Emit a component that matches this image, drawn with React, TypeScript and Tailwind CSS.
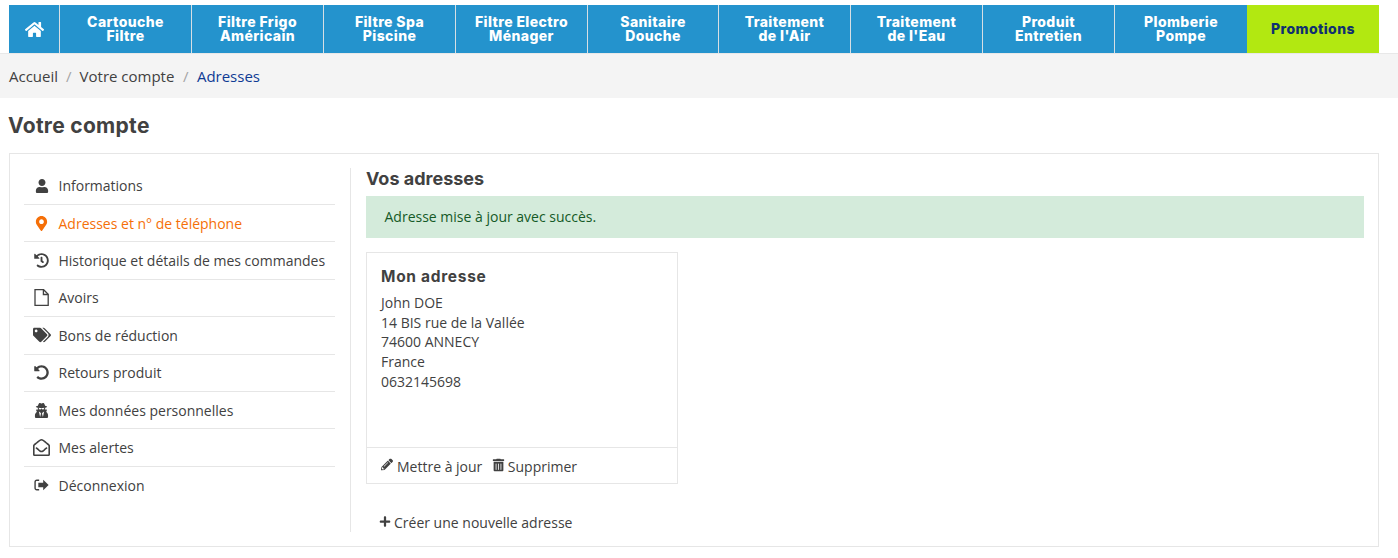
import { FaHome, FaUser, FaMapMarkerAlt, FaHistory, FaTags, FaUndoAlt, FaUserSecret, FaRegEnvelopeOpen, FaPencilAlt, FaTrashAlt, FaPlus } from 'react-icons/fa';
import type { ReactNode } from 'react';

const menu = [
  { top: 'Cartouche', bottom: 'Filtre', width: 'w-[132px]' },
  { top: 'Filtre Frigo', bottom: 'Américain', width: 'w-[132px]' },
  { top: 'Filtre Spa', bottom: 'Piscine', width: 'w-[132px]' },
  { top: 'Filtre Electro', bottom: 'Ménager', width: 'w-[132px]' },
  { top: 'Sanitaire', bottom: 'Douche', width: 'w-[131px]' },
  { top: 'Traitement', bottom: "de l'Air", width: 'w-[132px]' },
  { top: 'Traitement', bottom: "de l'Eau", width: 'w-[132px]' },
  { top: 'Produit', bottom: 'Entretien', width: 'w-[132px]' },
  { top: 'Plomberie', bottom: 'Pompe', width: 'w-[133px]' },
];

function SignOutIcon() {
  return (
    <svg viewBox="0 0 16 14" className="w-[15px] h-[14px]" fill="currentColor">
      <path d="M5.5 1.2H3C1.4 1.2.4 2.3.4 3.8v6.4c0 1.5 1 2.6 2.6 2.6h2.5v-1.5H3c-.7 0-1.1-.5-1.1-1.1V3.8c0-.6.4-1.1 1.1-1.1h2.5z" />
      <path d="M15.6 7 9.8 1.4v3.2H4.6v4.8h5.2v3.2z" />
    </svg>
  );
}

function FileIcon() {
  return (
    <svg viewBox="0 0 15 17" className="w-[15px] h-[17px]" fill="none" stroke="currentColor" strokeWidth="1.3">
      <path d="M1 .7h8.6L14.2 5.3V16.3H1z" />
      <path d="M9.4.7v4.8h4.8" />
    </svg>
  );
}

const accountLinks: { label: string; icon: ReactNode; active?: boolean }[] = [
  { label: 'Informations', icon: <FaUser className="text-[14px]" /> },
  { label: 'Adresses et n° de téléphone', icon: <FaMapMarkerAlt className="text-[15px]" />, active: true },
  { label: 'Historique et détails de mes commandes', icon: <FaHistory className="text-[15px]" /> },
  { label: 'Avoirs', icon: <FileIcon /> },
  { label: 'Bons de réduction', icon: <FaTags className="text-[18px]" /> },
  { label: 'Retours produit', icon: <FaUndoAlt className="text-[15px]" /> },
  { label: 'Mes données personnelles', icon: <FaUserSecret className="text-[15px]" /> },
  { label: 'Mes alertes', icon: <FaRegEnvelopeOpen className="text-[17px]" /> },
  { label: 'Déconnexion', icon: <SignOutIcon /> },
];

export default function App() {
  return (
    <div className="bg-white text-[#414141] text-[14px] font-['Open_Sans',sans-serif] h-[558px] overflow-hidden">
      <nav className="flex w-[1370px] h-[48px] mt-[5px] ml-[9px] text-[14px] leading-[14px] tracking-[0.4px] font-['Inter',sans-serif] font-extrabold">
        <div className="w-[50px] bg-[#2493cd] flex items-center justify-center text-white">
          <FaHome className="text-[19px]" />
        </div>
        {menu.map((item) => (
          <div key={item.top + item.bottom} className={`${item.width} bg-[#2493cd] border-l border-[#d6dfe4] text-white flex items-center justify-center text-center`}>
            <div>
              {item.top}
              <br />
              {item.bottom}
            </div>
          </div>
        ))}
        <div className="flex-1 bg-[#b2e811] flex items-center justify-center text-[#0f3070]">Promotions</div>
      </nav>

      <div className="h-[45px] bg-[#f4f4f4] border-t border-[#e8e8e8] pl-[9px] flex items-center text-[15px]">
        <span>Accueil</span>
        <span className="text-[#a5a5a5] mx-[8px]">/</span>
        <span>Votre compte</span>
        <span className="text-[#a5a5a5] mx-[8.5px]">/</span>
        <span className="text-[#0f3b94]">Adresses</span>
      </div>

      <h1 className="ml-[8px] mt-[14px] mb-[13px] h-[28px] leading-[28px] text-[21px] tracking-[0.3px] font-['Inter',sans-serif] font-bold text-[#414141]">Votre compte</h1>

      <section className="ml-[9px] w-[1370px] h-[394px] border border-[#e6e6e6] p-[14px] flex">
        <ul className="w-[311px] -mt-[0.4px] mr-[15px] shrink-0">
          {accountLinks.map((link, i) => (
            <li
              key={link.label}
              className={`h-[37.4px] flex items-center ${i < accountLinks.length - 1 ? 'border-b border-[#e6e6e6]' : ''} ${link.active ? 'text-[#f56f08]' : ''}`}
            >
              <span className="w-[34.5px] pl-[4px] pr-[3.5px] flex justify-center shrink-0">{link.icon}</span>
              <span>{link.label}</span>
            </li>
          ))}
        </ul>

        <div className="flex-1 border-l border-[#e6e6e6] pl-[15px] flex flex-col">
          <h2 className="h-[28px] leading-[22px] text-[18px] font-['Inter',sans-serif] font-bold shrink-0">Vos adresses</h2>
          <div className="h-[42px] bg-[#d4ebdb] text-[#155a27] flex items-center pl-[18.5px] pb-[1px] shrink-0">Adresse mise à jour avec succès.</div>

          <article className="w-[312px] h-[232px] mt-[14px] border border-[#e6e6e6] flex flex-col shrink-0">
            <div className="flex-1 px-[14px] pt-[13px]">
              <h3 className="h-[27px] leading-[22px] text-[15.5px] tracking-[0.7px] font-['Inter',sans-serif] font-bold">Mon adresse</h3>
              <address className="not-italic leading-[19.7px]">
                John DOE<br />
                14 BIS rue de la Vallée<br />
                74600 ANNECY<br />
                France<br />
                0632145698
              </address>
            </div>
            <div className="h-[36px] border-t border-[#e6e6e6] px-[14px] pt-[1px] flex items-center">
              <FaPencilAlt className="text-[12px] mr-[4px] -translate-y-[1.5px]" />
              <span>Mettre à jour</span>
              <FaTrashAlt className="text-[13px] ml-[10px] mr-[2.5px] -translate-y-[1.5px]" />
              <span>Supprimer</span>
            </div>
          </article>

          <div className="mt-[28px] pl-[13px] flex items-center shrink-0">
            <FaPlus className="text-[12px] mr-[3px] -translate-y-[1.5px]" />
            <span>Créer une nouvelle adresse</span>
          </div>
        </div>
      </section>
    </div>
  );
}
